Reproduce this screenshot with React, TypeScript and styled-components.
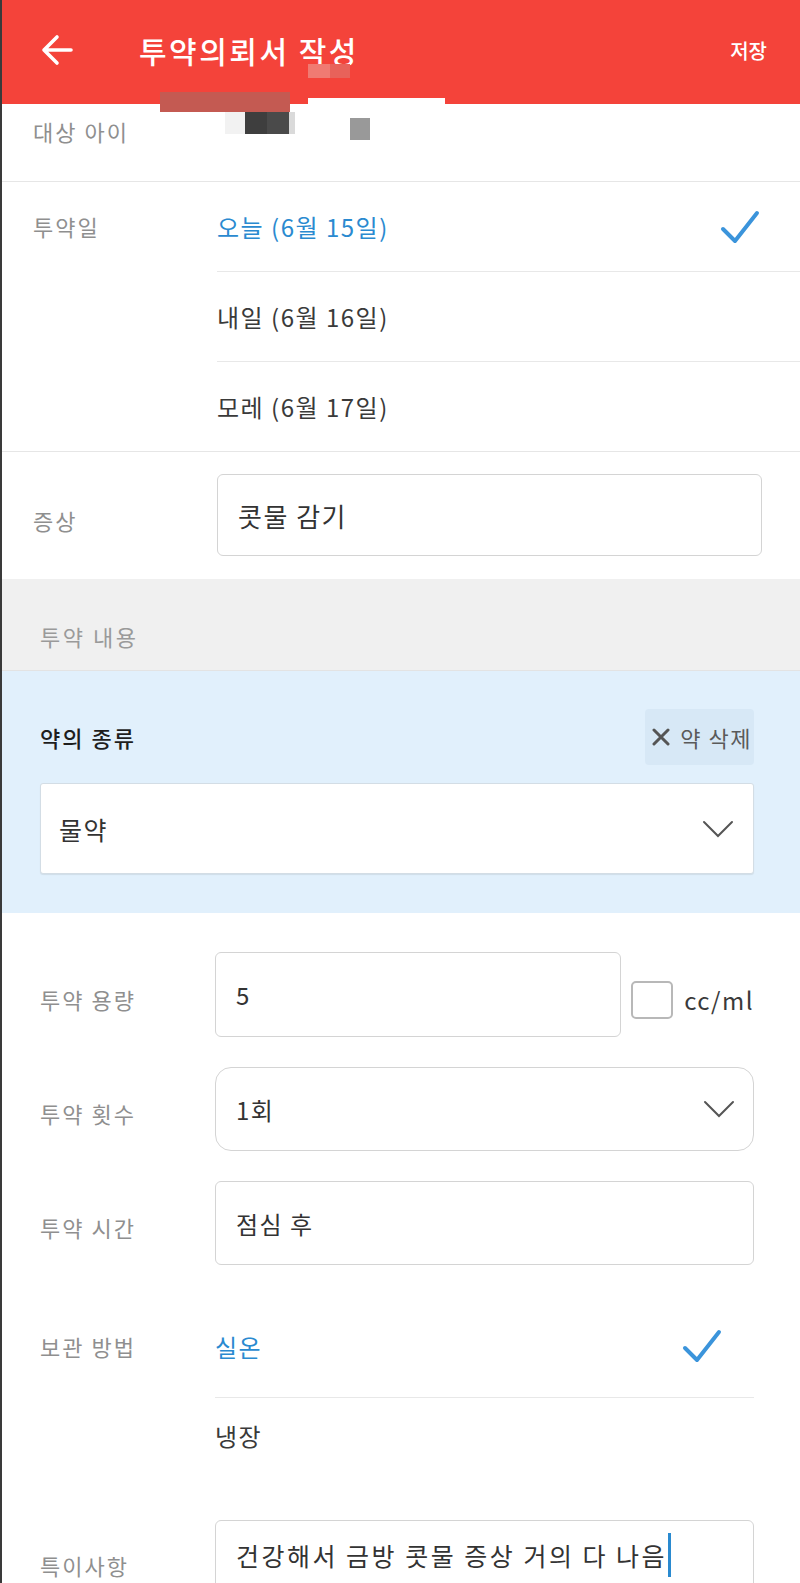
import React from "react";
import styled, { createGlobalStyle } from "styled-components";

const GlobalStyle = createGlobalStyle`
  html, body {
    margin: 0;
    padding: 0;
    background: #ffffff;
    overflow: hidden;
  }
  body {
    font-family: "Noto Sans CJK KR", "Noto Sans", sans-serif;
    -webkit-font-smoothing: antialiased;
  }
`;

const BLUE = "#2a8ad0";

function ArrowIcon() {
  return (
    <svg width="34" height="32" viewBox="0 0 34 32" fill="none">
      <path
        d="M31 16H4M17 3L4 16l13 13"
        stroke="#fff"
        strokeWidth="3.6"
        strokeLinecap="round"
        strokeLinejoin="round"
      />
    </svg>
  );
}

function CheckIcon() {
  return (
    <svg width="40" height="36" viewBox="0 0 40 36" fill="none">
      <path
        d="M3 20l12 12L37 4"
        stroke="#3b94db"
        strokeWidth="4"
        strokeLinecap="round"
        strokeLinejoin="round"
      />
    </svg>
  );
}

function Chevron() {
  return (
    <svg width="32" height="20" viewBox="0 0 32 20" fill="none">
      <path d="M2 3l14 14L30 3" stroke="#555" strokeWidth="2" strokeLinecap="round" />
    </svg>
  );
}

function CrossIcon() {
  return (
    <svg width="18" height="18" viewBox="0 0 18 18" fill="none">
      <path d="M2 2l14 14M16 2L2 16" stroke="#555" strokeWidth="3" strokeLinecap="round" />
    </svg>
  );
}

export default function App() {
  return (
    <>
      <GlobalStyle />
      <Page>
        <Header>
          <BackButton>
            <ArrowIcon />
          </BackButton>
          <Title>투약의뢰서 작성</Title>
          <SaveButton>저장</SaveButton>
        </Header>

        {/* pixelated redaction over the child's name */}
        <Mosaic $x={160} $y={92} $w={130} $h={20} $c="#c45a52" />
        <Mosaic $x={308} $y={98} $w={137} $h={80} $c="#ffffff" />
        <Mosaic $x={308} $y={64} $w={22} $h={14} $c="#f07a72" />
        <Mosaic $x={330} $y={64} $w={20} $h={14} $c="#e8625a" />
        <Mosaic $x={225} $y={112} $w={20} $h={22} $c="#f2f2f2" />
        <Mosaic $x={245} $y={112} $w={22} $h={22} $c="#3e3e3e" />
        <Mosaic $x={267} $y={112} $w={22} $h={22} $c="#4a4a4a" />
        <Mosaic $x={289} $y={112} $w={6} $h={22} $c="#dadada" />
        <Mosaic $x={350} $y={118} $w={20} $h={22} $c="#999999" />

        <TopRow $height={78}>
          <TopLabel>대상 아이</TopLabel>
        </TopRow>

        <TopRow>
          <TopLabel $tall>투약일</TopLabel>
          <OptionList>
            <Option $h={89} $active>
              오늘 (6월 15일)
              <CheckIcon />
            </Option>
            <Option $h={89}>내일 (6월 16일)</Option>
            <Option $h={89}>모레 (6월 17일)</Option>
          </OptionList>
        </TopRow>

        <SymptomRow>
          <TopLabel>증상</TopLabel>
          <TextBox $height={82} $size={26}>콧물 감기</TextBox>
        </SymptomRow>

        <SectionTitle>투약 내용</SectionTitle>

        <MedicineCard>
          <CardHead>
            <CardTitle>약의 종류</CardTitle>
            <DeleteButton>
              <CrossIcon />약 삭제
            </DeleteButton>
          </CardHead>
          <KindSelect>
            물약
            <Chevron />
          </KindSelect>
        </MedicineCard>

        <DetailForm>
          <FieldRow>
            <FieldLabel>투약 용량</FieldLabel>
            <DoseLine>
              <TextBox $height={85} $grow>5</TextBox>
              <CheckBox />
              <Unit>cc/ml</Unit>
            </DoseLine>
          </FieldRow>

          <FieldRow>
            <FieldLabel>투약 횟수</FieldLabel>
            <TextBox $height={84} $round>
              1회
              <Chevron />
            </TextBox>
          </FieldRow>

          <FieldRow>
            <FieldLabel>투약 시간</FieldLabel>
            <TextBox $height={84}>점심 후</TextBox>
          </FieldRow>

          <FieldRow $gap={47} $top>
            <FieldLabel $h={102}>보관 방법</FieldLabel>
            <OptionList>
              <Option $h={102} $active $inset>
                실온
                <CheckIcon />
              </Option>
              <Option $h={75} $inset>냉장</Option>
            </OptionList>
          </FieldRow>

          <FieldRow $top>
            <FieldLabel $h={90}>특이사항</FieldLabel>
            <NoteBox>
              건강해서 금방 콧물 증상 거의 다 나음
              <Caret />
            </NoteBox>
          </FieldRow>
        </DetailForm>
      </Page>
    </>
  );
}

const Page = styled.div`
  position: relative;
  width: 798px;
  height: 1583px;
  border-left: 2px solid #3a3a3a;
  overflow: hidden;
  background: #fff;
`;

const Header = styled.header`
  display: flex;
  align-items: center;
  height: 100px;
  margin-left: -2px;
  border-left: 2px solid #b8362e;
  padding: 0 33px 4px 38px;
  background: #f4433a;
  color: #fff;
`;

const BackButton = styled.div`
  display: flex;
  width: 99px;
`;

const Title = styled.h1`
  flex: 1;
  margin: 0;
  font-size: 30px;
  font-weight: 500;
  letter-spacing: 2.5px;
`;

const SaveButton = styled.span`
  font-size: 20px;
  font-weight: 500;
`;

const Mosaic = styled.div<{ $x: number; $y: number; $w: number; $h: number; $c: string }>`
  position: absolute;
  left: ${(p) => p.$x - 2}px;
  top: ${(p) => p.$y}px;
  width: ${(p) => p.$w}px;
  height: ${(p) => p.$h}px;
  background: ${(p) => p.$c};
`;

const TopRow = styled.div<{ $height?: number }>`
  display: grid;
  grid-template-columns: 184px 1fr;
  align-items: start;
  padding-left: 31px;
  border-bottom: 1px solid #e6e6e6;
  ${(p) => (p.$height ? `height: ${p.$height - 1}px;` : "")}
`;

const TopLabel = styled.div<{ $tall?: boolean }>`
  color: #8f8f8f;
  font-size: 22px;
  letter-spacing: 2px;
  line-height: ${(p) => (p.$tall ? "89px" : "34px")};
  padding-top: ${(p) => (p.$tall ? "0" : "10px")};
`;

const OptionList = styled.div`
  display: flex;
  flex-direction: column;
`;

const Option = styled.div<{ $h: number; $active?: boolean; $inset?: boolean }>`
  display: flex;
  align-items: center;
  justify-content: space-between;
  height: ${(p) => p.$h}px;
  padding-right: ${(p) => (p.$inset ? "32px" : "40px")};
  font-size: 24px;
  letter-spacing: 1.5px;
  color: ${(p) => (p.$active ? BLUE : "#3a3a3a")};
  border-bottom: 1px solid #e8e8e8;

  &:last-child {
    border-bottom: none;
  }
`;

const SymptomRow = styled.div`
  display: grid;
  grid-template-columns: 184px 1fr;
  align-items: center;
  padding: 22px 38px 23px 31px;
`;

const TextBox = styled.div<{ $height: number; $size?: number; $round?: boolean; $grow?: boolean }>`
  display: flex;
  align-items: center;
  justify-content: space-between;
  box-sizing: border-box;
  height: ${(p) => p.$height}px;
  ${(p) => (p.$grow ? "flex: 1;" : "")}
  padding: 0 18px 0 20px;
  border: 1px solid #d4d4d4;
  border-radius: ${(p) => (p.$round ? "16px" : "6px")};
  background: #fff;
  color: #333;
  font-size: ${(p) => p.$size ?? 24}px;
  letter-spacing: 1.5px;
`;

const SectionTitle = styled.div`
  display: flex;
  align-items: flex-end;
  box-sizing: border-box;
  height: 92px;
  padding: 0 0 18px 38px;
  background: #f0f0f0;
  border-bottom: 1px solid #e3e3e3;
  color: #9a9a9a;
  font-size: 22px;
  letter-spacing: 2.5px;
`;

const MedicineCard = styled.section`
  display: flex;
  flex-direction: column;
  gap: 18px;
  padding: 38px 46px 39px 38px;
  background: #e1f0fc;
`;

const CardHead = styled.div`
  display: flex;
  align-items: center;
  justify-content: space-between;
  height: 56px;
`;

const CardTitle = styled.div`
  color: #1e1e1e;
  font-size: 22px;
  font-weight: 500;
  letter-spacing: 2px;
`;

const DeleteButton = styled.div`
  display: flex;
  align-items: center;
  gap: 10px;
  height: 56px;
  padding: 0 2px 0 7px;
  border-radius: 4px;
  background: #d7e8f6;
  color: #5a5a5a;
  font-size: 22px;
  letter-spacing: 1.5px;
`;

const KindSelect = styled.div`
  display: flex;
  align-items: center;
  justify-content: space-between;
  height: 91px;
  box-sizing: border-box;
  padding: 0 19px 0 18px;
  background: #fff;
  border: 1px solid #d3dde5;
  border-radius: 3px;
  box-shadow: 0 1px 1px rgba(0, 0, 0, 0.08);
  color: #333;
  font-size: 25px;
  letter-spacing: 1.5px;
`;

const DetailForm = styled.section`
  display: flex;
  flex-direction: column;
  padding: 39px 46px 0 38px;
`;

const FieldRow = styled.div<{ $gap?: number; $top?: boolean }>`
  display: grid;
  grid-template-columns: 175px 1fr;
  align-items: ${(p) => (p.$top ? "start" : "center")};
  margin-bottom: ${(p) => p.$gap ?? 30}px;
`;

const FieldLabel = styled.div<{ $h?: number }>`
  color: #8f8f8f;
  font-size: 22px;
  letter-spacing: 2px;
  padding-top: 8px;
  ${(p) => (p.$h ? `display: flex; align-items: center; height: ${p.$h}px; padding-top: 0;` : "")}
`;

const DoseLine = styled.div`
  display: flex;
  align-items: center;
`;

const CheckBox = styled.div`
  position: relative;
  top: 5px;
  box-sizing: border-box;
  width: 42px;
  height: 38px;
  margin: 0 11px 0 10px;
  border: 2px solid #b8b8b8;
  border-radius: 5px;
`;

const Unit = styled.span`
  position: relative;
  top: 5px;
  color: #3a3a3a;
  font-size: 24px;
  letter-spacing: 1.5px;
`;

const NoteBox = styled.div`
  display: flex;
  align-items: center;
  box-sizing: border-box;
  height: 110px;
  padding: 0 20px 40px 20px;
  border: 1px solid #d4d4d4;
  border-radius: 6px;
  color: #333;
  font-size: 25px;
  letter-spacing: 2.5px;
`;

const Caret = styled.span`
  display: inline-block;
  width: 3px;
  height: 44px;
  margin-left: 1px;
  background: ${BLUE};
`;
